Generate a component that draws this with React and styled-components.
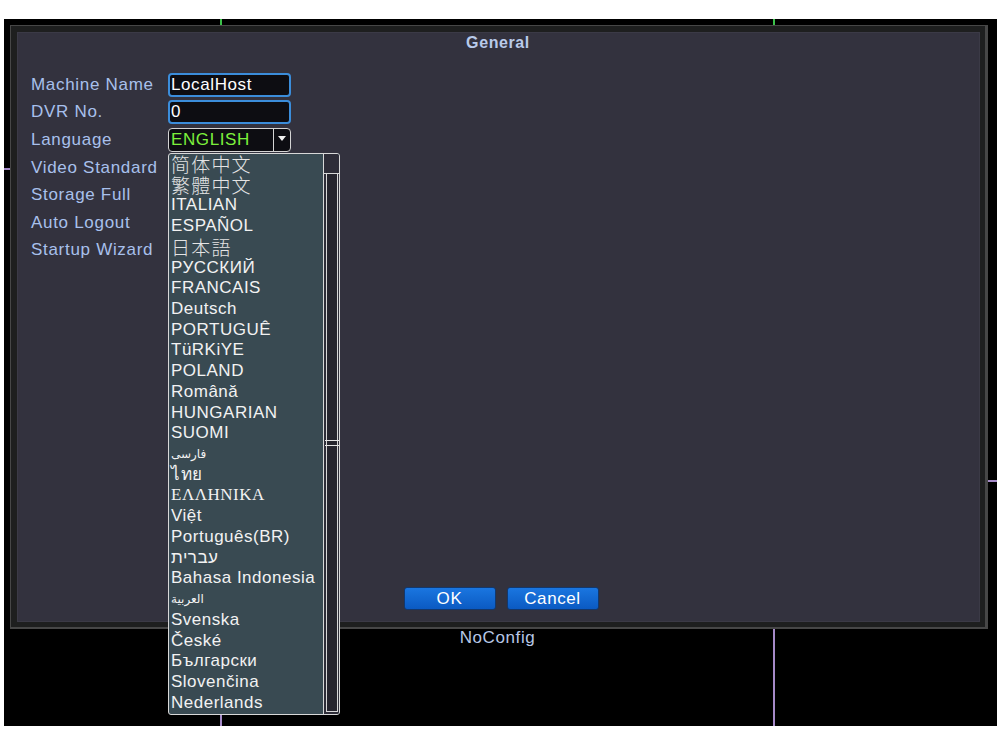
import React from "react";
import styled, { createGlobalStyle } from "styled-components";

const GlobalStyle = createGlobalStyle`
  html, body {
    margin: 0;
    padding: 0;
    background: #ffffff;
  }
  * {
    box-sizing: border-box;
  }
`;

const Page = styled.div`
  padding: 19px 3px 13px 4px;
  font-family: "Liberation Sans", Arial, sans-serif;
`;

const Screen = styled.div`
  position: relative;
  width: 993px;
  height: 707px;
  background: #000;
  display: grid;
  grid-template-columns: 218px 553px 1fr;
  grid-template-rows: 151px 312px 1fr;
`;

const Cell = styled.div`
  border-right: ${(p) => (p.$right ? `2px solid ${p.$right}` : "none")};
  border-bottom: ${(p) => (p.$bottom ? `2px solid ${p.$bottom}` : "none")};
  display: flex;
  justify-content: center;
  padding-top: 146px;
`;

const ChannelName = styled.span`
  color: #b7c7e6;
  font-size: 17px;
  letter-spacing: 0.6px;
  line-height: 20px;
`;

/* the config dialog lies over the camera grid */
const Dialog = styled.div`
  position: absolute;
  left: 6px;
  top: 6px;
  width: 978px;
  height: 604px;
  z-index: 1;
  border-style: solid;
  border-color: #474747;
  border-width: 1px 3px 2px 1px;
  padding: 6px 5px 5px 6px;
  background: #1e1f1f;
`;

const Inner = styled.div`
  height: 100%;
  background: #33323e;
  border: 1px solid #3b3a46;
  padding: 0 14px 11px 13px;
  display: flex;
  flex-direction: column;
`;

const Title = styled.div`
  text-align: center;
  color: #b9cae9;
  font-size: 16px;
  font-weight: bold;
  letter-spacing: 0.6px;
  line-height: 20px;
`;

const Form = styled.div`
  margin-top: 18px;
  display: grid;
  grid-template-columns: 137px 123px;
  grid-auto-rows: 27.6px;
  align-items: center;
`;

const Label = styled.div`
  color: #a8c0ec;
  font-size: 17px;
  letter-spacing: 0.7px;
  white-space: nowrap;
`;

const TextBox = styled.div`
  height: 24px;
  border: 2px solid #3b8ddb;
  border-radius: 4px;
  background: #0d0d12;
  color: #ffffff;
  font-size: 17px;
  letter-spacing: 0.6px;
  line-height: 20px;
  padding: 0 1px;
`;

const SelectWrap = styled.div`
  position: relative;
`;

const SelectBox = styled.div`
  height: 24px;
  border: 1px solid #d4d4d4;
  border-radius: 4px;
  background: #0d0d12;
  display: flex;
`;

const SelectValue = styled.div`
  flex: 1;
  color: #7cf03c;
  font-size: 17px;
  letter-spacing: 0.6px;
  line-height: 22px;
  padding-left: 2px;
`;

const ArrowBox = styled.div`
  width: 17px;
  border-left: 1px solid #d4d4d4;
  display: flex;
  align-items: center;
  justify-content: center;
  &::after {
    content: "";
    border-left: 4px solid transparent;
    border-right: 4px solid transparent;
    border-top: 5px solid #f0f0f0;
    margin-top: -3px;
  }
`;

const DropList = styled.div`
  position: absolute;
  left: 0;
  top: calc(100% + 1px);
  width: 172px;
  height: 562px;
  z-index: 2;
  border: 1px solid #d8d8d8;
  border-radius: 3px;
  background: #394a52;
  display: flex;
  overflow: hidden;
`;

const Items = styled.div`
  flex: 1;
  display: flex;
  flex-direction: column;
`;

const Item = styled.div`
  height: 20.73px;
  line-height: 20.73px;
  padding-left: 2px;
  color: ${(p) => (p.$cjk ? "#e4e4e4" : "#f2f2f2")};
  white-space: nowrap;
  font-size: ${(p) => (p.$cjk ? 19 : p.$size || 17)}px;
  letter-spacing: ${(p) => (p.$cjk ? "1.2px" : p.$size ? "0" : "0.5px")};
  font-weight: ${(p) => (p.$cjk ? 300 : "normal")};
  font-family: ${(p) =>
    p.$cjk
      ? `"Noto Sans CJK ${p.$cjk}", sans-serif`
      : p.$serif
      ? `"Liberation Serif", serif`
      : `"Liberation Sans", "DejaVu Sans", sans-serif`};
`;

const ScrollTrack = styled.div`
  width: 16px;
  background: #2e2d38;
  border-left: 1px solid #d8d8d8;
  display: flex;
  flex-direction: column;
`;

const UpBox = styled.div`
  height: 20px;
  border-bottom: 1px solid #d8d8d8;
`;

const Channel = styled.div`
  flex: 1;
  margin: 0 1px 2px 2px;
  border-left: 1px solid #d8d8d8;
  border-right: 1px solid #d8d8d8;
  border-bottom: 1px solid #d8d8d8;
  background: #26252e;
  padding-top: ${(p) => p.$offset}px;
`;

const Thumb = styled.div`
  height: 6px;
  border-top: 1px solid #e6e6e6;
  border-bottom: 1px solid #e6e6e6;
  margin: 0 -2px;
`;

const ButtonRow = styled.div`
  margin-top: auto;
  display: flex;
  justify-content: center;
  gap: 11px;
  padding-left: 6px;
`;

const Button = styled.button`
  width: 92px;
  height: 23px;
  padding: 0;
  border: 1px solid #12386e;
  border-radius: 3px;
  background: linear-gradient(#1a76e0, #0b5ac2);
  color: #ffffff;
  font-family: "Liberation Sans", Arial, sans-serif;
  font-size: 17px;
  letter-spacing: 0.6px;
  line-height: 20px;
`;

const languages = [
  { t: "简体中文", cjk: "SC" },
  { t: "繁體中文", cjk: "TC" },
  { t: "ITALIAN" },
  { t: "ESPAÑOL" },
  { t: "日本語", cjk: "JP" },
  { t: "РУССКИЙ" },
  { t: "FRANCAIS" },
  { t: "Deutsch" },
  { t: "PORTUGUÊ" },
  { t: "TüRKiYE" },
  { t: "POLAND" },
  { t: "Română" },
  { t: "HUNGARIAN" },
  { t: "SUOMI" },
  { t: "فارسی", size: 12 },
  { t: "ไทย" },
  { t: "ΕΛΛΗΝΙΚΑ", serif: true },
  { t: "Việt" },
  { t: "Português(BR)" },
  { t: "עברית" },
  { t: "Bahasa Indonesia" },
  { t: "العربية", size: 12 },
  { t: "Svenska" },
  { t: "České" },
  { t: "Български" },
  { t: "Slovenčina" },
  { t: "Nederlands" },
];

const hiddenRows = ["Video Standard", "Storage Full", "Auto Logout", "Startup Wizard"];

export default function App() {
  return (
    <Page>
      <GlobalStyle />
      <Screen>
        <Cell $right="#3cc24a" $bottom="#a58ac8" />
        <Cell $right="#3cc24a" />
        <Cell />
        <Cell $right="#a58ac8" />
        <Cell $right="#a58ac8" />
        <Cell $bottom="#a58ac8" />
        <Cell $right="#a58ac8" />
        <Cell $right="#a58ac8">
          <ChannelName>NoConfig</ChannelName>
        </Cell>
        <Cell />

        <Dialog>
          <Inner>
            <Title>General</Title>
            <Form>
              <Label>Machine Name</Label>
              <TextBox>LocalHost</TextBox>
              <Label>DVR No.</Label>
              <TextBox>0</TextBox>
              <Label>Language</Label>
              <SelectWrap>
                <SelectBox>
                  <SelectValue>ENGLISH</SelectValue>
                  <ArrowBox />
                </SelectBox>
                <DropList>
                  <Items>
                    {languages.map((l) => (
                      <Item
                        key={l.t}
                        $cjk={l.cjk}
                        $size={l.size}
                        $serif={l.serif}
                      >
                        {l.t}
                      </Item>
                    ))}
                  </Items>
                  <ScrollTrack>
                    <UpBox />
                    <Channel $offset={266}>
                      <Thumb />
                    </Channel>
                  </ScrollTrack>
                </DropList>
              </SelectWrap>
              {hiddenRows.map((r) => (
                <React.Fragment key={r}>
                  <Label>{r}</Label>
                  <div />
                </React.Fragment>
              ))}
            </Form>
            <ButtonRow>
              <Button>OK</Button>
              <Button>Cancel</Button>
            </ButtonRow>
          </Inner>
        </Dialog>
      </Screen>
    </Page>
  );
}
